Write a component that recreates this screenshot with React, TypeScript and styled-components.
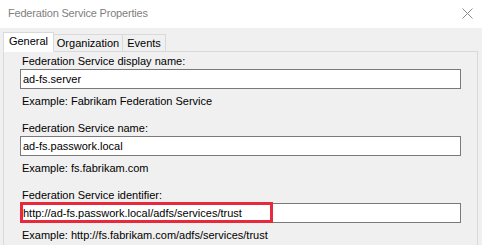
import React from 'react'
import styled, { createGlobalStyle } from 'styled-components'

const GlobalStyle = createGlobalStyle`
  html, body {
    margin: 0;
    padding: 0;
    background: #f0f0f0;
  }
  body {
    font-family: "Liberation Sans", Arial, sans-serif;
    font-size: 11px;
    color: #000;
  }
`;

const Window = styled.div`
  box-sizing: border-box;
  width: 482px;
  height: 245px;
  overflow: hidden;
  background: #f0f0f0;
  display: flex;
  flex-direction: column;
`;

const TitleBar = styled.div`
  box-sizing: border-box;
  height: 28px;
  flex: none;
  background: #ffffff;
  display: flex;
  align-items: center;
  justify-content: space-between;
  padding: 0 9px 2px 8px;
`;

const Title = styled.span`
  font-size: 11px;
  letter-spacing: -0.2px;
  color: #7f7f7f;
`;

const CloseButton = styled.svg`
  width: 11px;
  height: 11px;
`;

const Body = styled.div`
  flex: 1;
  padding: 4px 4px 0 3px;
  display: flex;
  flex-direction: column;
`;

const TabStrip = styled.div`
  display: flex;
  align-items: flex-end;
  height: 20px;
  position: relative;
  z-index: 1;
  margin-bottom: -1px;
`;

const Tab = styled.div<{ $active?: boolean; $width: number }>`
  box-sizing: border-box;
  width: ${p => p.$width}px;
  height: ${p => (p.$active ? '20px' : '18px')};
  padding-bottom: ${p => (p.$active ? '2px' : '0')};
  display: flex;
  align-items: center;
  justify-content: center;
  border: 1px solid #d9d9d9;
  border-bottom: ${p => (p.$active ? '1px solid #ffffff' : '1px solid #d9d9d9')};
  border-left-width: ${p => (p.$active ? '1px' : '0')};
  background: ${p => (p.$active ? '#ffffff' : '#f0f0f0')};
`;

const Panel = styled.div`
  flex: 1;
  box-sizing: border-box;
  border: 1px solid #d9d9d9;
  border-bottom: none;
  padding: 2px 15px 0 16px;
  display: flex;
  flex-direction: column;
`;

const Group = styled.div`
  display: flex;
  flex-direction: column;
  margin-bottom: 12px;
`;

const Label = styled.div`
  height: 15px;
  line-height: 15px;
  padding-left: 2px;
`;

const FieldWrap = styled.div`
  position: relative;
`;

const Field = styled.div`
  box-sizing: border-box;
  height: 20px;
  width: 441px;
  border: 1px solid #7a7a7a;
  background: #ffffff;
  line-height: 18px;
  padding-left: 2px;
  white-space: nowrap;
`;

const Highlight = styled.div`
  position: absolute;
  left: 0;
  top: -1px;
  width: 253px;
  height: 21px;
  box-sizing: border-box;
  border: 3px solid #e8293b;
`;

const Example = styled.div`
  height: 15px;
  line-height: 15px;
  margin-top: 5px;
  padding-left: 2px;
`;

const tabs = [
  { name: 'General', width: 51, active: true },
  { name: 'Organization', width: 69 },
  { name: 'Events', width: 43 },
];

const fields = [
  { label: 'Federation Service display name:', value: 'ad-fs.server', example: 'Example: Fabrikam Federation Service' },
  { label: 'Federation Service name:', value: 'ad-fs.passwork.local', example: 'Example: fs.fabrikam.com' },
  { label: 'Federation Service identifier:', value: 'http://ad-fs.passwork.local/adfs/services/trust', example: 'Example: http://fs.fabrikam.com/adfs/services/trust', marked: true },
];

export default function App() {
  return (
    <>
      <GlobalStyle />
      <Window>
        <TitleBar>
          <Title>Federation Service Properties</Title>
          <CloseButton viewBox="0 0 11 11">
            <path d="M0.5 0.5 L10.5 10.5 M10.5 0.5 L0.5 10.5" stroke="#8a8a8a" strokeWidth="1" fill="none" />
          </CloseButton>
        </TitleBar>
        <Body>
          <TabStrip>
            {tabs.map(t => (
              <Tab key={t.name} $active={t.active} $width={t.width}>{t.name}</Tab>
            ))}
          </TabStrip>
          <Panel>
            {fields.map(f => (
              <Group key={f.label}>
                <Label>{f.label}</Label>
                <FieldWrap>
                  <Field>{f.value}</Field>
                  {f.marked && <Highlight />}
                </FieldWrap>
                <Example>{f.example}</Example>
              </Group>
            ))}
          </Panel>
        </Body>
      </Window>
    </>
  )
}
